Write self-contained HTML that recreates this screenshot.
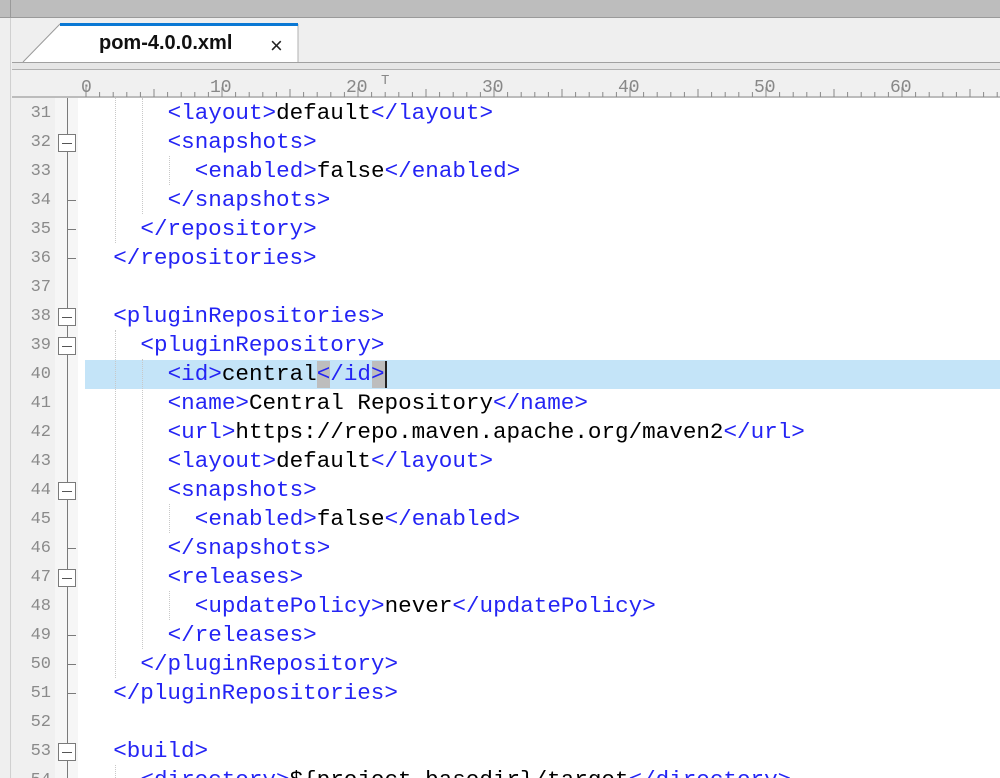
<!DOCTYPE html>
<html style="overflow:hidden;height:778px"><head><meta charset="utf-8"><style>
body{margin:0;width:1000px;height:778px;overflow:hidden;background:#efefef;position:relative;font-family:"Liberation Sans",sans-serif}
.a{position:absolute}
.ln{position:absolute;left:12px;width:39px;text-align:right;font:17px "Liberation Mono",monospace;color:#8a8a8a;height:29px;line-height:31px}
.c{position:absolute;font:22.6px "Liberation Mono",monospace;height:29px;line-height:31px;white-space:pre;color:#000}
.t{color:#2424f4}
.g{position:absolute;width:0;border-left:1px dotted #c8c8c8;height:29px}
.box{position:absolute;left:58px;width:16px;height:16px;border:1px solid #7a7a7a;background:#fff}
.box:after{content:"";position:absolute;left:3px;right:3px;top:8px;height:1px;background:#555}
.tk{position:absolute;left:67px;width:9px;height:1px;background:#7a7a7a}
</style></head><body>
<div class="a" style="left:0;top:0;width:1000px;height:17px;background:#bdbdbd;border-bottom:1px solid #9a9a9a"></div>
<div class="a" style="left:10px;top:0;width:1px;height:18px;background:#9a9a9a"></div>
<div class="a" style="left:10px;top:18px;width:1px;height:760px;background:#d0d0d0"></div>
<svg class="a" style="left:0;top:18px" width="310" height="46"><polygon points="23,44 60,6 298,6 298,44" fill="#fff"/><polyline points="23,44 60,6" stroke="#9a9a9a" fill="none"/><line x1="298" y1="6" x2="298" y2="44" stroke="#b0b0b0"/><rect x="60" y="5" width="238" height="3" fill="#0a78d4"/></svg>
<div class="a" style="left:99px;top:32px;font-size:20px;font-weight:bold;color:#111">pom-4.0.0.xml</div>
<div class="a" style="left:270px;top:33px;font-size:22px;color:#222">×</div>
<div class="a" style="left:12px;top:62px;width:988px;height:1px;background:#a0a0a0"></div>
<div class="a" style="left:12px;top:63px;width:988px;height:6px;background:#e6e6e6"></div>
<div class="a" style="left:12px;top:69px;width:988px;height:1px;background:#b0b0b0"></div>
<div class="a" style="left:12px;top:70px;width:988px;height:28px;background:#f0f0f0"></div>
<svg class="a" style="left:12px;top:70px" width="988" height="30" font-family="Liberation Mono" font-size="18" fill="#888">
<line x1="0" y1="27" x2="988" y2="27" stroke="#888"/>
<g stroke="#888">
<path d="M74 27v-10M87.6 27v-5M101.2 27v-5M114.8 27v-5M128.4 27v-5M142 27v-8M155.6 27v-5M169.2 27v-5M182.8 27v-5M196.4 27v-5M210 27v-10M223.6 27v-5M237.2 27v-5M250.8 27v-5M264.4 27v-5M278 27v-8M291.6 27v-5M305.2 27v-5M318.8 27v-5M332.4 27v-5M346 27v-10M359.6 27v-5M373.2 27v-5M386.8 27v-5M400.4 27v-5M414 27v-8M427.6 27v-5M441.2 27v-5M454.8 27v-5M468.4 27v-5M482 27v-10M495.6 27v-5M509.2 27v-5M522.8 27v-5M536.4 27v-5M550 27v-8M563.6 27v-5M577.2 27v-5M590.8 27v-5M604.4 27v-5M618 27v-10M631.6 27v-5M645.2 27v-5M658.8 27v-5M672.4 27v-5M686 27v-8M699.6 27v-5M713.2 27v-5M726.8 27v-5M740.4 27v-5M754 27v-10M767.6 27v-5M781.2 27v-5M794.8 27v-5M808.4 27v-5M822 27v-8M835.6 27v-5M849.2 27v-5M862.8 27v-5M876.4 27v-5M890 27v-10M903.6 27v-5M917.2 27v-5M930.8 27v-5M944.4 27v-5M958 27v-8M971.6 27v-5M985.2 27v-5"/></g>
<text x="69" y="22">0</text><text x="198" y="22">10</text><text x="334" y="22">20</text><text x="470" y="22">30</text><text x="606" y="22">40</text><text x="742" y="22">50</text><text x="878" y="22">60</text><text x="369" y="14" font-size="14">T</text>
</svg>
<div class="a" style="left:12px;top:98px;width:43px;height:680px;background:#f0f0f0"></div>
<div class="a" style="left:55px;top:98px;width:23px;height:680px;background:#f6f6f6"></div>
<div class="a" style="left:78px;top:98px;width:922px;height:680px;background:#fff"></div>
<div class="a" style="left:67px;top:98px;width:1px;height:680px;background:#7a7a7a"></div>
<div class="a" style="left:85px;top:360px;width:915px;height:29px;background:#c4e4f8"></div>
<div class="a" style="left:317px;top:361px;width:13px;height:27px;background:#bdbdbd"></div>
<div class="a" style="left:372px;top:361px;width:13px;height:27px;background:#bdbdbd"></div>
<div class="a" style="left:385px;top:361px;width:2px;height:27px;background:#222"></div>

<div class="g" style="left:115px;top:98px;height:145px"></div>
<div class="g" style="left:142px;top:98px;height:116px"></div>
<div class="g" style="left:169px;top:156px;height:29px"></div>
<div class="g" style="left:115px;top:330px;height:348px"></div>
<div class="g" style="left:142px;top:359px;height:290px"></div>
<div class="g" style="left:169px;top:504px;height:29px"></div>
<div class="g" style="left:169px;top:591px;height:29px"></div>
<div class="g" style="left:115px;top:765px;height:13px"></div>

<div class="box" style="top:134px"></div>
<div class="tk" style="top:200px"></div><div class="tk" style="top:229px"></div><div class="tk" style="top:258px"></div>
<div class="box" style="top:308px"></div><div class="box" style="top:337px"></div>
<div class="box" style="top:482px"></div><div class="tk" style="top:548px"></div>
<div class="box" style="top:569px"></div><div class="tk" style="top:635px"></div><div class="tk" style="top:664px"></div><div class="tk" style="top:693px"></div>
<div class="box" style="top:743px"></div>

<div class="ln" style="top:98px">31</div><div class="ln" style="top:127px">32</div><div class="ln" style="top:156px">33</div><div class="ln" style="top:185px">34</div><div class="ln" style="top:214px">35</div><div class="ln" style="top:243px">36</div><div class="ln" style="top:272px">37</div><div class="ln" style="top:301px">38</div><div class="ln" style="top:330px">39</div><div class="ln" style="top:359px">40</div><div class="ln" style="top:388px">41</div><div class="ln" style="top:417px">42</div><div class="ln" style="top:446px">43</div><div class="ln" style="top:475px">44</div><div class="ln" style="top:504px">45</div><div class="ln" style="top:533px">46</div><div class="ln" style="top:562px">47</div><div class="ln" style="top:591px">48</div><div class="ln" style="top:620px">49</div><div class="ln" style="top:649px">50</div><div class="ln" style="top:678px">51</div><div class="ln" style="top:707px">52</div><div class="ln" style="top:736px">53</div><div class="ln" style="top:765px;height:13px;overflow:hidden">54</div>

<div class="c" style="left:167.6px;top:98px"><span class="t">&lt;layout&gt;</span>default<span class="t">&lt;/layout&gt;</span></div>
<div class="c" style="left:167.6px;top:127px"><span class="t">&lt;snapshots&gt;</span></div>
<div class="c" style="left:194.8px;top:156px"><span class="t">&lt;enabled&gt;</span>false<span class="t">&lt;/enabled&gt;</span></div>
<div class="c" style="left:167.6px;top:185px"><span class="t">&lt;/snapshots&gt;</span></div>
<div class="c" style="left:140.4px;top:214px"><span class="t">&lt;/repository&gt;</span></div>
<div class="c" style="left:113.2px;top:243px"><span class="t">&lt;/repositories&gt;</span></div>
<div class="c" style="left:113.2px;top:301px"><span class="t">&lt;pluginRepositories&gt;</span></div>
<div class="c" style="left:140.4px;top:330px"><span class="t">&lt;pluginRepository&gt;</span></div>
<div class="c" style="left:167.6px;top:359px"><span class="t">&lt;id&gt;</span>central<span class="t">&lt;/id&gt;</span></div>
<div class="c" style="left:167.6px;top:388px"><span class="t">&lt;name&gt;</span>Central Repository<span class="t">&lt;/name&gt;</span></div>
<div class="c" style="left:167.6px;top:417px"><span class="t">&lt;url&gt;</span>https://repo.maven.apache.org/maven2<span class="t">&lt;/url&gt;</span></div>
<div class="c" style="left:167.6px;top:446px"><span class="t">&lt;layout&gt;</span>default<span class="t">&lt;/layout&gt;</span></div>
<div class="c" style="left:167.6px;top:475px"><span class="t">&lt;snapshots&gt;</span></div>
<div class="c" style="left:194.8px;top:504px"><span class="t">&lt;enabled&gt;</span>false<span class="t">&lt;/enabled&gt;</span></div>
<div class="c" style="left:167.6px;top:533px"><span class="t">&lt;/snapshots&gt;</span></div>
<div class="c" style="left:167.6px;top:562px"><span class="t">&lt;releases&gt;</span></div>
<div class="c" style="left:194.8px;top:591px"><span class="t">&lt;updatePolicy&gt;</span>never<span class="t">&lt;/updatePolicy&gt;</span></div>
<div class="c" style="left:167.6px;top:620px"><span class="t">&lt;/releases&gt;</span></div>
<div class="c" style="left:140.4px;top:649px"><span class="t">&lt;/pluginRepository&gt;</span></div>
<div class="c" style="left:113.2px;top:678px"><span class="t">&lt;/pluginRepositories&gt;</span></div>
<div class="c" style="left:113.2px;top:736px"><span class="t">&lt;build&gt;</span></div>
<div class="c" style="left:140.4px;top:765px;height:13px;overflow:hidden"><span class="t">&lt;directory&gt;</span>${project.basedir}/target<span class="t">&lt;/directory&gt;</span></div>
</body></html>
